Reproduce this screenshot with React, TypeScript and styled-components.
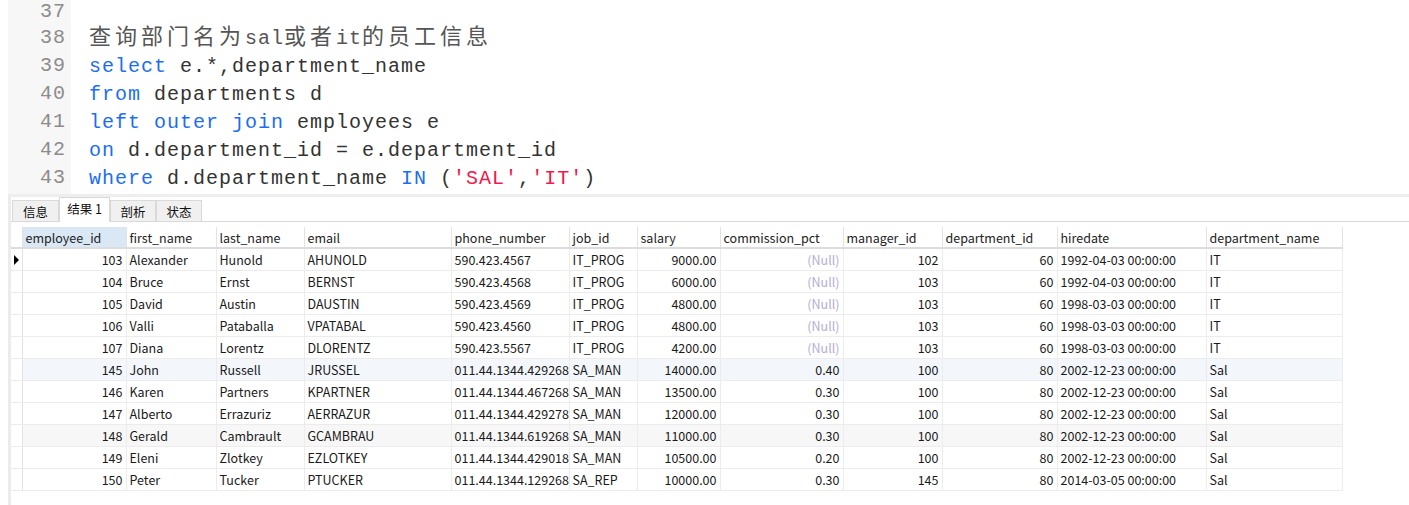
import React from "react";
import styled, { createGlobalStyle } from "styled-components";

const Global = createGlobalStyle`
  html, body { margin: 0; padding: 0; background: #fff; }
  body { width: 1409px; height: 505px; overflow: hidden; }
`;

const Page = styled.div`
  display: flex;
  flex-direction: column;
  height: 505px;
  padding-left: 8px;
  box-sizing: border-box;
`;

const Editor = styled.div`
  display: flex;
  height: 194px;
  overflow: hidden;
  background: #fff;
`;

const Gutter = styled.div`
  width: 63px;
  background: #f7f7f7;
  flex: none;
`;

const LineNo = styled.div<{ $first?: boolean }>`
  height: ${(p) => (p.$first ? 24 : 28)}px;
  line-height: ${(p) => (p.$first ? 24 : 28)}px;
  text-align: right;
  padding-right: 5px;
  font-family: "Liberation Mono", monospace;
  font-size: 20px;
  letter-spacing: 1px;
  color: #8c8c8c;
`;

const Code = styled.div`
  padding-left: 18px;
  padding-top: 24px;
  flex: 1;
`;

const CodeLine = styled.div`
  height: 28px;
  line-height: 30px;
  white-space: pre;
  font-family: "Liberation Mono", monospace;
  font-size: 20px;
  letter-spacing: 1px;
  color: #333;
`;

const Kw = styled.span`
  color: #1b6ef3;
`;

const Str = styled.span`
  color: #f01a4c;
`;

const Cjk = styled.span`
  font-family: "Noto Sans CJK SC", sans-serif;
  font-size: 22px;
  line-height: 16px;
  letter-spacing: 4px;
  color: #555;
  vertical-align: 0;
`;

const Plain = styled.span`
  color: #555;
`;

const Divider = styled.div`
  height: 3px;
  background: #eeeeee;
`;

const Panel = styled.div`
  flex: 1;
  border-left: 3px solid #ececec;
  display: flex;
  flex-direction: column;
`;

const TabBar = styled.div`
  display: flex;
  align-items: flex-end;
  height: 24px;
  padding-left: 1px;
  border-bottom: 1px solid #d9d9d9;
`;

const Tab = styled.div<{ $active?: boolean; $w: number }>`
  box-sizing: border-box;
  height: ${(p) => (p.$active ? 25 : 21)}px;
  width: ${(p) => p.$w}px;
  display: flex;
  align-items: center;
  justify-content: center;
  font-family: "Noto Sans CJK SC", sans-serif;
  font-size: 12.5px;
  color: #111;
  background: ${(p) => (p.$active ? "#fff" : "#f0f0f0")};
  border: 1px solid #d9d9d9;
  border-bottom: none;
  margin-bottom: ${(p) => (p.$active ? "-1px" : "0")};
  padding-bottom: ${(p) => (p.$active ? "4px" : "0")};
`;

const GridWrap = styled.div`
  padding-top: 5px;
`;

const Table = styled.table`
  width: 1331px;
  border-collapse: collapse;
  table-layout: fixed;
  font-family: "Noto Sans CJK SC", sans-serif;
  font-size: 12.5px;
  color: #1a1a1a;
`;

const Th = styled.th<{ $sel?: boolean }>`
  height: 20px;
  padding: 0 3px;
  text-align: left;
  font-weight: normal;
  white-space: nowrap;
  color: #222;
  background: ${(p) => (p.$sel ? "#dae8f6" : "#fff")};
  border-right: 1px solid #e3e3e3;
  border-bottom: 2px solid #dcdcdc;
`;

const Row = styled.tr<{ $bg?: string }>`
  background: ${(p) => p.$bg || "#fff"};
`;

const Td = styled.td<{ $right?: boolean; $null?: boolean }>`
  height: 21px;
  padding: 0 3px;
  white-space: nowrap;
  overflow: visible;
  text-align: ${(p) => (p.$right ? "right" : "left")};
  color: ${(p) => (p.$null ? "#b5add0" : "#1a1a1a")};
  border-right: 1px solid #ececec;
  border-bottom: 1px solid #ececec;
`;

const Indicator = styled.td`
  height: 21px;
  padding: 0;
  border-right: 1px solid #e3e3e3;
  border-bottom: 1px solid #ececec;
  background: #fff;
`;

const IndHead = styled.th`
  padding: 0;
  border-right: 1px solid #e3e3e3;
  border-bottom: 2px solid #dcdcdc;
  background: #fff;
`;

const Arrow = styled.span`
  display: block;
  width: 0;
  height: 0;
  margin-left: 3px;
  border-top: 5px solid transparent;
  border-bottom: 5px solid transparent;
  border-left: 5px solid #000;
`;

const cols: { name: string; w: number; right?: boolean }[] = [
  { name: "employee_id", w: 104, right: true },
  { name: "first_name", w: 90 },
  { name: "last_name", w: 88 },
  { name: "email", w: 147 },
  { name: "phone_number", w: 118 },
  { name: "job_id", w: 68 },
  { name: "salary", w: 83, right: true },
  { name: "commission_pct", w: 123, right: true },
  { name: "manager_id", w: 99, right: true },
  { name: "department_id", w: 115, right: true },
  { name: "hiredate", w: 149 },
  { name: "department_name", w: 136 },
];

const rows: string[][] = [
  ["103", "Alexander", "Hunold", "AHUNOLD", "590.423.4567", "IT_PROG", "9000.00", "", "102", "60", "1992-04-03 00:00:00", "IT"],
  ["104", "Bruce", "Ernst", "BERNST", "590.423.4568", "IT_PROG", "6000.00", "", "103", "60", "1992-04-03 00:00:00", "IT"],
  ["105", "David", "Austin", "DAUSTIN", "590.423.4569", "IT_PROG", "4800.00", "", "103", "60", "1998-03-03 00:00:00", "IT"],
  ["106", "Valli", "Pataballa", "VPATABAL", "590.423.4560", "IT_PROG", "4800.00", "", "103", "60", "1998-03-03 00:00:00", "IT"],
  ["107", "Diana", "Lorentz", "DLORENTZ", "590.423.5567", "IT_PROG", "4200.00", "", "103", "60", "1998-03-03 00:00:00", "IT"],
  ["145", "John", "Russell", "JRUSSEL", "011.44.1344.429268", "SA_MAN", "14000.00", "0.40", "100", "80", "2002-12-23 00:00:00", "Sal"],
  ["146", "Karen", "Partners", "KPARTNER", "011.44.1344.467268", "SA_MAN", "13500.00", "0.30", "100", "80", "2002-12-23 00:00:00", "Sal"],
  ["147", "Alberto", "Errazuriz", "AERRAZUR", "011.44.1344.429278", "SA_MAN", "12000.00", "0.30", "100", "80", "2002-12-23 00:00:00", "Sal"],
  ["148", "Gerald", "Cambrault", "GCAMBRAU", "011.44.1344.619268", "SA_MAN", "11000.00", "0.30", "100", "80", "2002-12-23 00:00:00", "Sal"],
  ["149", "Eleni", "Zlotkey", "EZLOTKEY", "011.44.1344.429018", "SA_MAN", "10500.00", "0.20", "100", "80", "2002-12-23 00:00:00", "Sal"],
  ["150", "Peter", "Tucker", "PTUCKER", "011.44.1344.129268", "SA_REP", "10000.00", "0.30", "145", "80", "2014-03-05 00:00:00", "Sal"],
];

const rowBg = (i: number) => (i === 5 ? "#f3f7fc" : i === 8 ? "#f7f7f7" : "#fff");

export default function App() {
  return (
    <>
      <Global />
      <Page>
        <Editor>
          <Gutter>
            {[37, 38, 39, 40, 41, 42, 43].map((n, i) => (
              <LineNo key={n} $first={i === 0}>
                {n}
              </LineNo>
            ))}
          </Gutter>
          <Code>
            <CodeLine>
              <Cjk>查询部门名为</Cjk>
              <Plain>sal</Plain>
              <Cjk>或者</Cjk>
              <Plain>it</Plain>
              <Cjk>的员工信息</Cjk>
            </CodeLine>
            <CodeLine>
              <Kw>select</Kw> e.*,department_name
            </CodeLine>
            <CodeLine>
              <Kw>from</Kw> departments d
            </CodeLine>
            <CodeLine>
              <Kw>left</Kw> <Kw>outer</Kw> <Kw>join</Kw> employees e
            </CodeLine>
            <CodeLine>
              <Kw>on</Kw> d.department_id = e.department_id
            </CodeLine>
            <CodeLine>
              <Kw>where</Kw> d.department_name <Kw>IN</Kw> (<Str>'SAL'</Str>,<Str>'IT'</Str>)
            </CodeLine>
          </Code>
        </Editor>
        <Divider />
        <Panel>
          <TabBar>
            <Tab $w={47}>信息</Tab>
            <Tab $w={51} $active>
              结果 1
            </Tab>
            <Tab $w={46}>剖析</Tab>
            <Tab $w={46}>状态</Tab>
          </TabBar>
          <GridWrap>
            <Table>
              <colgroup>
                <col style={{ width: 11 }} />
                {cols.map((c) => (
                  <col key={c.name} style={{ width: c.w }} />
                ))}
              </colgroup>
              <thead>
                <tr>
                  <IndHead />
                  {cols.map((c, i) => (
                    <Th key={c.name} $sel={i === 0}>
                      {c.name}
                    </Th>
                  ))}
                </tr>
              </thead>
              <tbody>
                {rows.map((r, i) => (
                  <Row key={i} $bg={rowBg(i)}>
                    <Indicator>{i === 0 && <Arrow />}</Indicator>
                    {r.map((v, j) => (
                      <Td key={j} $right={cols[j].right} $null={v === ""}>
                        {v === "" ? "(Null)" : v}
                      </Td>
                    ))}
                  </Row>
                ))}
              </tbody>
            </Table>
          </GridWrap>
        </Panel>
      </Page>
    </>
  );
}
